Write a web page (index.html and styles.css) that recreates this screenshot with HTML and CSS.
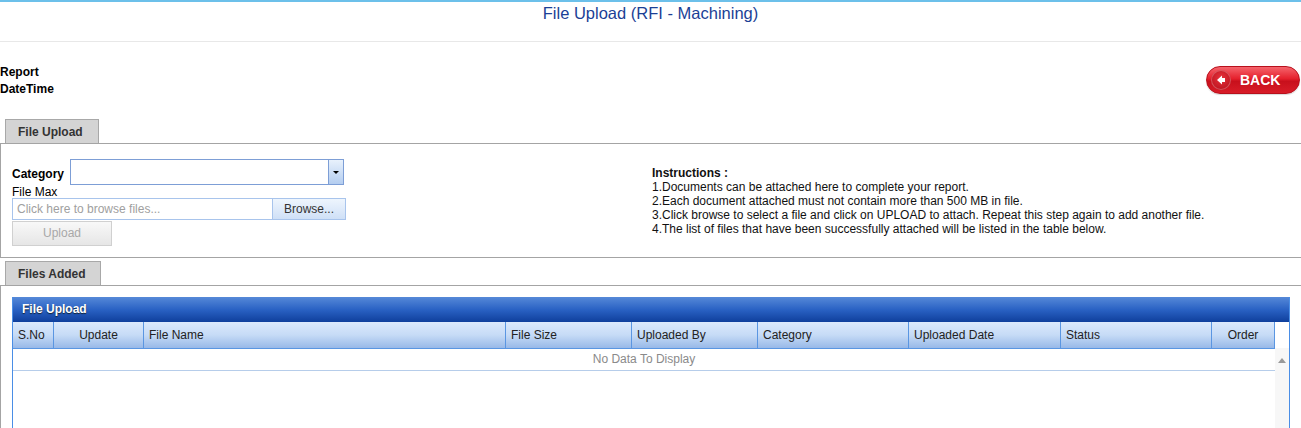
FILE: index.html
```html
<!DOCTYPE html>
<html lang="en">
<head>
<meta charset="UTF-8" />
<meta name="viewport" content="width=device-width, initial-scale=1" />
<title>File Upload (RFI - Machining)</title>
<link rel="stylesheet" href="styles.css">
</head>
<body>
<div class="page-head">
  <h1>File Upload (RFI - Machining)</h1>
</div>

<div class="report-row">
  <div class="report-info">
    <div>Report</div>
    <div>DateTime</div>
  </div>
  <button class="back-btn" type="button">
    <span class="back-icon">
      <svg width="16" height="16" viewBox="0 0 16 16"><path d="M4 8 L9 3.5 L9 6 L12 6 L12 10 L9 10 L9 12.5 Z" fill="#fff"/></svg>
    </span>
    BACK
  </button>
</div>

<div class="tab-strip">
  <div class="tab">File Upload</div>
</div>
<div class="panel upload-panel">
  <div class="upload-form">
    <div class="cat-row">
      <label class="cat-label">Category</label>
      <div class="combo">
        <div class="combo-text"></div>
        <div class="combo-btn"><span class="caret"></span></div>
      </div>
    </div>
    <div class="file-max">File Max</div>
    <div class="browse-row">
      <div class="browse-input">Click here to browse files...</div>
      <div class="browse-btn">Browse...</div>
    </div>
    <div class="upload-btn">Upload</div>
  </div>
  <div class="instructions">
    <div class="ins-title">Instructions :</div>
    <div>1.Documents can be attached here to complete your report.</div>
    <div>2.Each document attached must not contain more than 500 MB in file.</div>
    <div>3.Click browse to select a file and click on UPLOAD to attach. Repeat this step again to add another file.</div>
    <div>4.The list of files that have been successfully attached will be listed in the table below.</div>
  </div>
</div>

<div class="tab-strip second">
  <div class="tab">Files Added</div>
</div>
<div class="panel files-panel">
  <div class="grid">
    <div class="grid-title">File Upload</div>
    <div class="grid-body">
      <div class="grid-main">
        <div class="grid-head">
          <div class="col c-sno">S.No</div>
          <div class="col c-upd center">Update</div>
          <div class="col c-name">File Name</div>
          <div class="col c-size">File Size</div>
          <div class="col c-by">Uploaded By</div>
          <div class="col c-cat">Category</div>
          <div class="col c-date">Uploaded Date</div>
          <div class="col c-status">Status</div>
          <div class="col c-order center">Order</div>
        </div>
        <div class="empty-row">No Data To Display</div>
      </div>
      <div class="scroll-col">
        <div class="scroll-head"></div>
        <div class="scroll-track"><span class="up-arrow"></span></div>
      </div>
    </div>
  </div>
</div>
</body>
</html>
```

FILE: styles.css
```css
body { margin: 0; font-family: "Liberation Sans", Arial, sans-serif; font-size: 12px; color: #000; background: #fff; overflow: hidden; }

.page-head { border-top: 2px solid #6cc0ea; border-bottom: 1px solid #e8e8e8; height: 39px; }
.page-head h1 { margin: 0; padding-top: 2px; text-align: center; font-size: 16.5px; font-weight: normal; color: #1b3f96; line-height: 19px; }

.report-row { display: flex; justify-content: space-between; align-items: flex-start; padding: 22px 1px 0 0; height: 55px; }
.report-info { font-weight: bold; line-height: 17px; margin-top: 0; }
.back-btn { width: 94px; height: 28px; margin-top: 2px; border: 1px solid #b8101c; border-radius: 14px; background: linear-gradient(#f5646c, #e5202c 45%, #c8101c 55%, #d81c28); color: #fff; font-family: "Liberation Sans", Arial, sans-serif; font-weight: bold; font-size: 14px; display: flex; align-items: center; gap: 9px; padding: 0 4px; cursor: pointer; box-shadow: 0 1px 1px rgba(0,0,0,0.15); }
.back-icon { width: 20px; height: 20px; border-radius: 50%; background: radial-gradient(circle at 50% 40%, #e8323c, #b00c18); box-shadow: inset 0 0 0 1px rgba(255,255,255,0.25); display: flex; align-items: center; justify-content: center; }

.tab-strip { padding-left: 5px; display: flex; height: 24px; }
.tab-strip.second { margin-top: 3px; }
.tab { background: #d4d4d4; border: 1px solid #a8a8a8; border-bottom: none; padding: 0 12px; line-height: 24px; font-weight: bold; color: #333; }
.tab-strip .tab { width: 68px; }
.tab-strip.second .tab { width: 70px; }

.panel { border-top: 1px solid #a4a4a4; border-left: 1px solid #a4a4a4; }

.upload-panel { display: flex; height: 113px; border-bottom: 1px solid #a4a4a4; }
.upload-form { width: 640px; padding: 15px 0 0 11px; }
.cat-row { display: flex; align-items: center; }
.cat-label { font-weight: bold; width: 58px; margin-top: 3px; }
.combo { display: flex; width: 272px; height: 24px; border: 1px solid #7d9ed6; }
.combo-text { flex: 1; background: #fff; }
.combo-btn { width: 14px; border-left: 1px solid #7d9ed6; background: linear-gradient(#e8f1fc, #b4cdf0); display: flex; align-items: center; justify-content: center; }
.caret { border-left: 3px solid transparent; border-right: 3px solid transparent; border-top: 3px solid #000; }
.file-max { margin-top: 1px; line-height: 12px; }
.browse-row { display: flex; margin-top: 0; height: 22px; }
.browse-input { width: 255px; border: 1px solid #a8c4ec; color: #a0a0a0; padding-left: 4px; line-height: 20px; }
.browse-btn { width: 72px; border: 1px solid #a8c4ec; border-left: none; background: linear-gradient(#eef5fd, #cfe0f7); color: #333; text-align: center; line-height: 20px; }
.upload-btn { width: 98px; height: 23px; margin-top: 1px; border: 1px solid #d0d0d0; background: linear-gradient(#f8f8f8, #e6e6e6); color: #a8a8a8; text-align: center; line-height: 23px; }

.instructions { padding-top: 22px; line-height: 14px; color: #111; }
.ins-title { font-weight: bold; }

.files-panel { padding: 11px 0 0 11px; height: 200px; }
.grid { width: 1276px; border: 1px solid #4a8ee6; border-top: none; }
.grid-title { height: 25px; line-height: 24px; padding-left: 9px; color: #fff; font-weight: bold; text-shadow: 0 1px 1px #123; background: linear-gradient(#5689d8, #2a62c4 50%, #0f3f9c); }
.grid-body { display: flex; }
.grid-main { width: 1262px; }
.grid-head { display: flex; height: 26px; background: linear-gradient(#dbe9fc, #c6dbf6 50%, #98b9e8); border-bottom: 1px solid #5a96e2; }
.col { border-right: 1px solid #5a96e2; line-height: 27px; padding-left: 5px; box-sizing: border-box; color: #222; }
.col.center { text-align: center; padding-left: 0; }
.c-sno { width: 41px; }
.c-upd { width: 90px; }
.c-name { width: 362px; }
.c-size { width: 126px; }
.c-by { width: 126px; }
.c-cat { width: 151px; }
.c-date { width: 152px; }
.c-status { width: 151px; }
.c-order { width: 63px; }
.empty-row { height: 21px; line-height: 20px; text-align: center; color: #8a8a8a; border-bottom: 1px solid #b6cdea; }
.scroll-col { flex: 1; display: flex; flex-direction: column; }
.scroll-head { height: 26px; background: #fff; }
.scroll-track { height: 200px; background: #f7f7f7; position: relative; }
.up-arrow { position: absolute; left: 3px; top: 10px; border-left: 4px solid transparent; border-right: 4px solid transparent; border-bottom: 5px solid #999; }
```
